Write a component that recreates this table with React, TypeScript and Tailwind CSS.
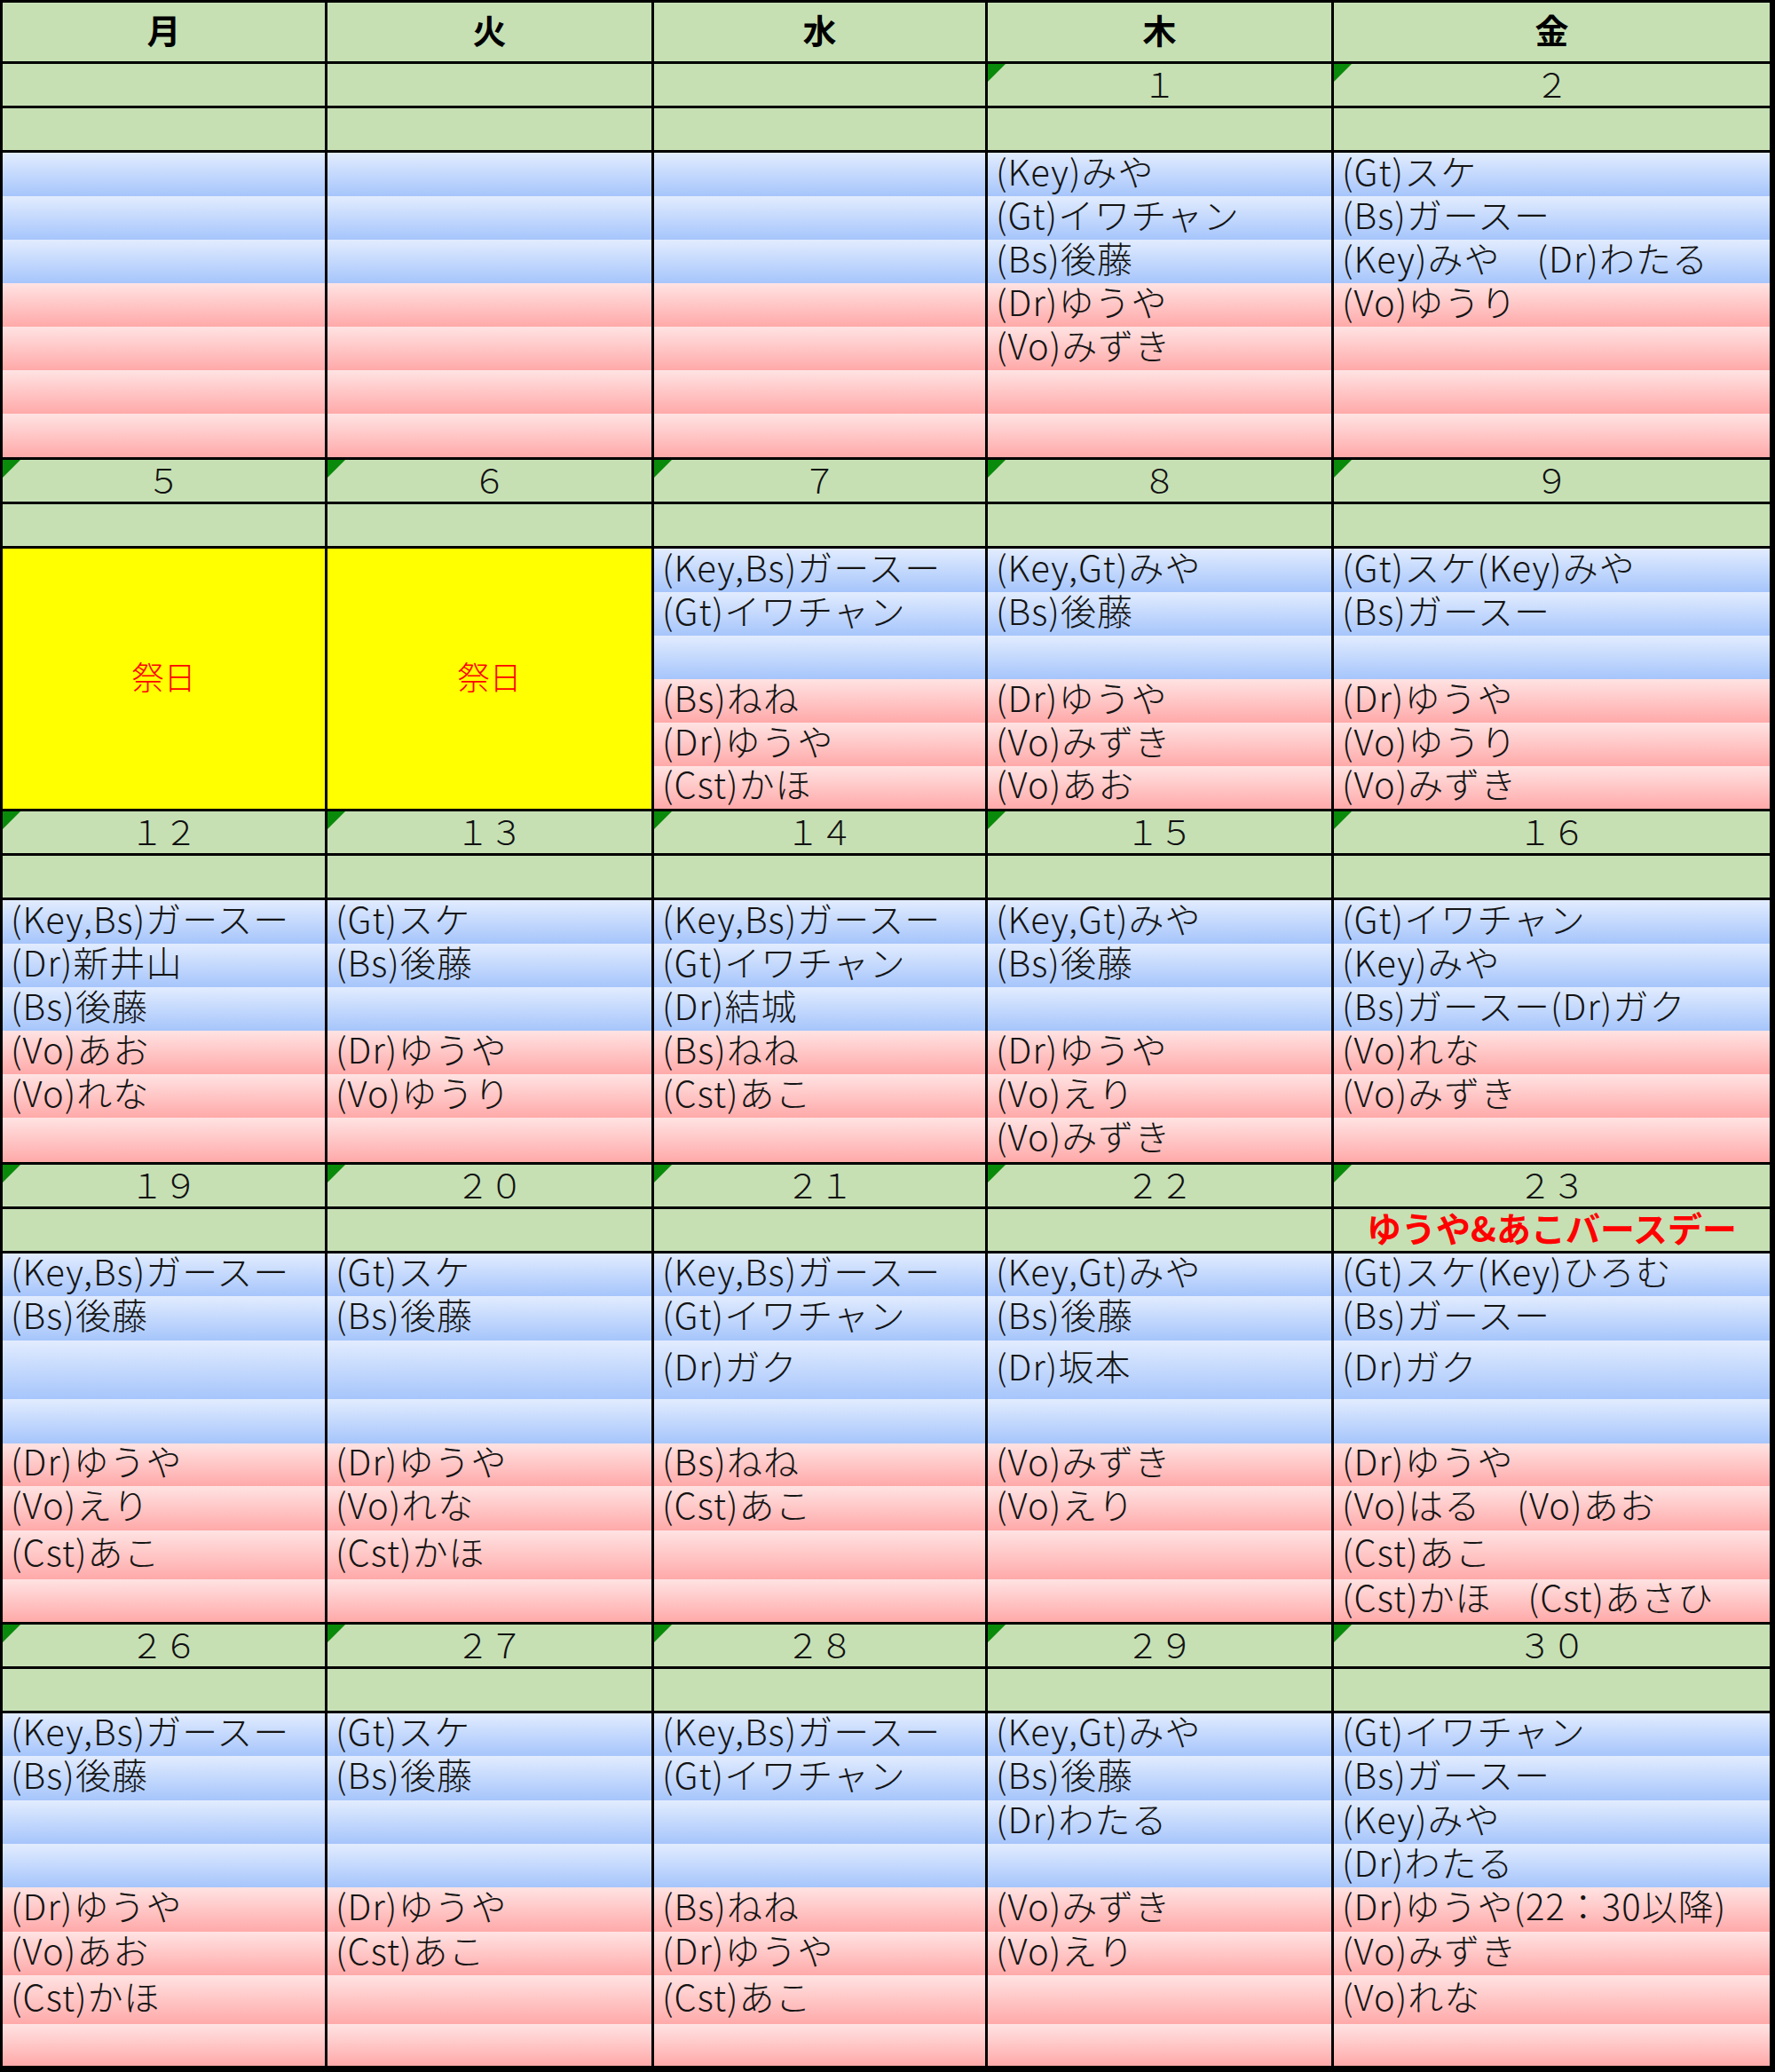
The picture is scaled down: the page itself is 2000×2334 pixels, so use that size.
import React from "react";

// column content widths; 3px black gaps between them act as the grid lines
const COLS = ["w-[363px]", "w-[365px]", "w-[373px]", "w-[387px]", "w-[491px]"];
const DAYS = ["月", "火", "水", "木", "金"];

type Week = {
  dates: (string | null)[];
  note?: (string | null)[];
  heights: number[];
  blue: number; // first N rows are blue, rest pink
  cells: (string[] | "holiday")[];
};

const WEEKS: Week[] = [
  {
    dates: [null, null, null, "１", "２"],
    heights: [49, 49, 49, 49, 49, 49, 49],
    blue: 3,
    cells: [
      [],
      [],
      [],
      ["(Key)みや", "(Gt)イワチャン", "(Bs)後藤", "(Dr)ゆうや", "(Vo)みずき"],
      ["(Gt)スケ", "(Bs)ガースー", "(Key)みや　(Dr)わたる", "(Vo)ゆうり"],
    ],
  },
  {
    dates: ["５", "６", "７", "８", "９"],
    heights: [49, 49, 49, 49, 49, 48],
    blue: 3,
    cells: [
      "holiday",
      "holiday",
      ["(Key,Bs)ガースー", "(Gt)イワチャン", "", "(Bs)ねね", "(Dr)ゆうや", "(Cst)かほ"],
      ["(Key,Gt)みや", "(Bs)後藤", "", "(Dr)ゆうや", "(Vo)みずき", "(Vo)あお"],
      ["(Gt)スケ(Key)みや", "(Bs)ガースー", "", "(Dr)ゆうや", "(Vo)ゆうり", "(Vo)みずき"],
    ],
  },
  {
    dates: ["１２", "１３", "１４", "１５", "１６"],
    heights: [49, 49, 49, 49, 49, 50],
    blue: 3,
    cells: [
      ["(Key,Bs)ガースー", "(Dr)新井山", "(Bs)後藤", "(Vo)あお", "(Vo)れな"],
      ["(Gt)スケ", "(Bs)後藤", "", "(Dr)ゆうや", "(Vo)ゆうり"],
      ["(Key,Bs)ガースー", "(Gt)イワチャン", "(Dr)結城", "(Bs)ねね", "(Cst)あこ"],
      ["(Key,Gt)みや", "(Bs)後藤", "", "(Dr)ゆうや", "(Vo)えり", "(Vo)みずき"],
      ["(Gt)イワチャン", "(Key)みや", "(Bs)ガースー(Dr)ガク", "(Vo)れな", "(Vo)みずき"],
    ],
  },
  {
    dates: ["１９", "２０", "２１", "２２", "２３"],
    note: [null, null, null, null, "ゆうや&あこバースデー"],
    heights: [48, 50, 66, 50, 48, 50, 55, 48],
    blue: 4,
    cells: [
      ["(Key,Bs)ガースー", "(Bs)後藤", "", "", "(Dr)ゆうや", "(Vo)えり", "(Cst)あこ"],
      ["(Gt)スケ", "(Bs)後藤", "", "", "(Dr)ゆうや", "(Vo)れな", "(Cst)かほ"],
      ["(Key,Bs)ガースー", "(Gt)イワチャン", "(Dr)ガク", "", "(Bs)ねね", "(Cst)あこ"],
      ["(Key,Gt)みや", "(Bs)後藤", "(Dr)坂本", "", "(Vo)みずき", "(Vo)えり"],
      [
        "(Gt)スケ(Key)ひろむ",
        "(Bs)ガースー",
        "(Dr)ガク",
        "",
        "(Dr)ゆうや",
        "(Vo)はる　(Vo)あお",
        "(Cst)あこ",
        "(Cst)かほ　(Cst)あさひ",
      ],
    ],
  },
  {
    dates: ["２６", "２７", "２８", "２９", "３０"],
    heights: [48, 50, 49, 49, 50, 49, 55, 47],
    blue: 4,
    cells: [
      ["(Key,Bs)ガースー", "(Bs)後藤", "", "", "(Dr)ゆうや", "(Vo)あお", "(Cst)かほ"],
      ["(Gt)スケ", "(Bs)後藤", "", "", "(Dr)ゆうや", "(Cst)あこ"],
      ["(Key,Bs)ガースー", "(Gt)イワチャン", "", "", "(Bs)ねね", "(Dr)ゆうや", "(Cst)あこ"],
      ["(Key,Gt)みや", "(Bs)後藤", "(Dr)わたる", "", "(Vo)みずき", "(Vo)えり"],
      [
        "(Gt)イワチャン",
        "(Bs)ガースー",
        "(Key)みや",
        "(Dr)わたる",
        "(Dr)ゆうや(22：30以降)",
        "(Vo)みずき",
        "(Vo)れな",
      ],
    ],
  },
];

function Marker() {
  return (
    <svg className="absolute top-0 left-0" width="20" height="20" viewBox="0 0 20 20">
      <polygon points="0,0 20,0 0,20" fill="#0a8a0a" />
    </svg>
  );
}

function WeekBlock({ week }: { week: Week }) {
  const total = week.heights.reduce((a, b) => a + b, 0);
  return (
    <div className="flex flex-col gap-y-[3px]">
      {/* date row */}
      <div className="flex gap-x-[3px]">
        {week.dates.map((d, i) => (
          <div
            key={i}
            className={`${COLS[i]} relative h-[47px] bg-[#c6e0b4] flex items-center justify-center pb-[3px] text-[38px] leading-[38px] font-light text-[#111]`}
          >
            {d && <Marker />}
            {d}
          </div>
        ))}
      </div>
      {/* memo row */}
      <div className="flex gap-x-[3px]">
        {COLS.map((c, i) => (
          <div
            key={i}
            className={`${c} h-[47px] bg-[#c6e0b4] flex items-center justify-center pb-[7px] text-[39px] leading-[38px] font-bold text-[#ff0000]`}
          >
            {week.note?.[i]}
          </div>
        ))}
      </div>
      {/* entries */}
      <div className="flex gap-x-[3px]">
        {week.cells.map((cell, i) =>
          cell === "holiday" ? (
            <div
              key={i}
              className={`${COLS[i]} bg-[#ffff00] flex items-center justify-center pb-[8px] text-[36px] font-light text-[#ff0000]`}
              style={{ height: total }}
            >
              祭日
            </div>
          ) : (
            <div key={i} className={`${COLS[i]} flex flex-col`}>
              {week.heights.map((h, r) => (
                <div
                  key={r}
                  className={
                    "flex items-center pl-[9px] pb-[10px] text-[40px] leading-[36px] tracking-[1px] font-light whitespace-nowrap text-[#141414] bg-linear-to-b " +
                    (r < week.blue ? "from-[#e2ecfe] to-[#a6c5fb]" : "from-[#ffe3e3] to-[#ffa9a9]")
                  }
                  style={{ height: h }}
                >
                  {cell[r] ?? ""}
                </div>
              ))}
            </div>
          )
        )}
      </div>
    </div>
  );
}

export default function App() {
  return (
    <div className="w-[2000px] h-[2334px] bg-black pt-[3px] pl-[3px] pr-[6px] pb-[7px] font-['Noto_Sans_CJK_JP',sans-serif]">
      <div className="flex flex-col gap-y-[3px]">
        <div className="flex gap-x-[3px]">
          {DAYS.map((d, i) => (
            <div
              key={d}
              className={`${COLS[i]} h-[66px] bg-[#c6e0b4] flex items-center justify-center pb-[6px] text-[38px] font-bold leading-[1.2] text-black`}
            >
              {d}
            </div>
          ))}
        </div>
        {WEEKS.map((w, i) => (
          <WeekBlock key={i} week={w} />
        ))}
      </div>
    </div>
  );
}
